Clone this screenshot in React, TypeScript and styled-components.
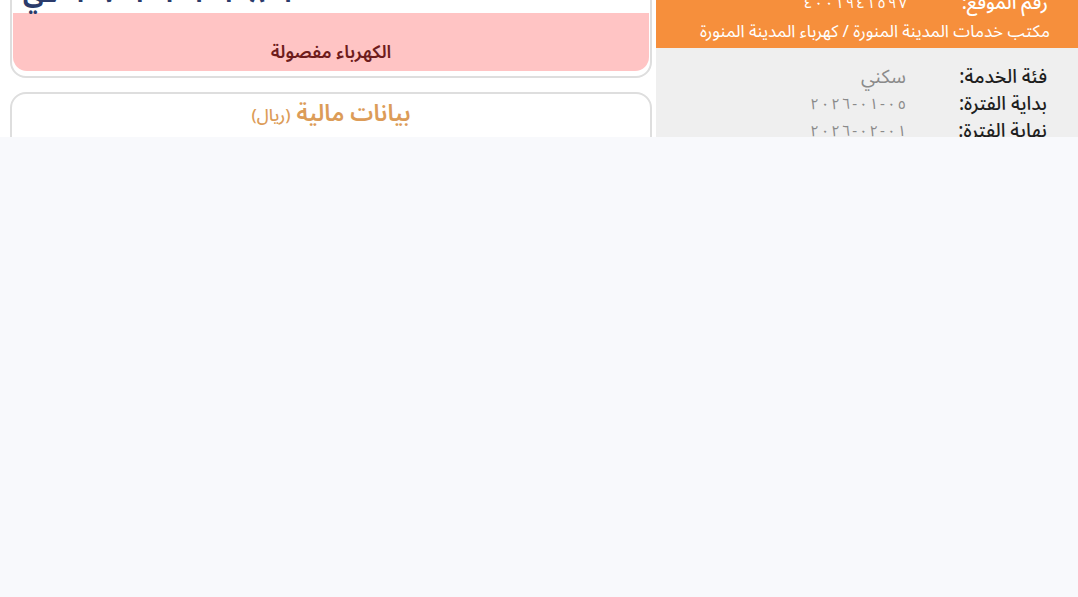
import React from 'react';
import styled, { createGlobalStyle } from 'styled-components';

const GlobalStyle = createGlobalStyle`
  html, body {
    margin: 0;
    padding: 0;
    background: #f8f9fc;
    font-family: "Noto Sans Arabic", "DejaVu Sans", "Noto Sans", sans-serif;
  }
`;

const arabic = `"Noto Sans Arabic", "DejaVu Sans", "Noto Sans", sans-serif`;

// letter-spacing is ignored for Arabic script, so spread the digits with thin spaces
const spread = (s: string) => s.split('').join('\u2009');

const Strip = styled.div`
  height: 137px;
  overflow: hidden;
  background: #ffffff;
`;

// the screenshot is a page scrolled down a little, so the content starts above the fold
const Scroller = styled.div`
  margin-top: -37px;
  display: grid;
  grid-template-columns: 642px 1fr;
  column-gap: 4px;
  padding-left: 10px;
`;

const LeftColumn = styled.div`
  display: flex;
  flex-direction: column;
  gap: 14px;
`;

const Card = styled.div`
  background: #ffffff;
  border: 2px solid #dedede;
  border-radius: 16px;
  padding: 0 1px 5px;
  overflow: hidden;
`;

const NumberRow = styled.div`
  height: 42px;
  display: flex;
  align-items: flex-end;
  padding: 0 10px 6px;
  direction: ltr;
`;

const BigNumber = styled.span`
  font-family: ${arabic};
  font-size: 26px;
  font-weight: 700;
  color: #2b3b6b;
  line-height: 1;
  word-spacing: 8px;
  unicode-bidi: bidi-override;
`;

const Banner = styled.div`
  height: 58px;
  background: #ffc4c4;
  border-radius: 0 0 14px 14px;
  display: flex;
  align-items: flex-end;
  justify-content: center;
  padding-bottom: 7px;
  box-sizing: border-box;
`;

const BannerText = styled.span`
  font-family: ${arabic};
  font-size: 18px;
  line-height: 24px;
  font-weight: 600;
  color: #6e1c1c;
  direction: rtl;
`;

const FinanceCard = styled(Card)`
  height: 200px;
  padding: 4px 0 0;
`;

const FinanceTitle = styled.h2`
  margin: 0;
  text-align: center;
  direction: rtl;
  font-family: ${arabic};
  font-size: 23px;
  font-weight: 600;
  color: #dc9c58;
  line-height: 32px;
`;

const Small = styled.span`
  font-size: 17px;
  font-weight: 500;
`;

const RightColumn = styled.div`
  display: flex;
  flex-direction: column;
  direction: rtl;
  background: #efefef;
  min-height: 260px;
`;

const OrangeHeader = styled.div`
  background: #f68f3c;
  padding: 26px 30px 1px 12px;
  color: #ffffff;
`;

const InfoRow = styled.div<{ $line?: number }>`
  display: grid;
  grid-template-columns: 141px 1fr;
  line-height: ${(p) => p.$line ?? 27}px;
  font-family: ${arabic};
  font-size: 19px;
  text-align: right;
`;

const Label = styled.span<{ $light?: boolean }>`
  color: ${(p) => (p.$light ? '#ffffff' : '#1f1f1f')};
  font-weight: 500;
  white-space: nowrap;
`;

const Value = styled.span<{ $light?: boolean; $ltr?: boolean }>`
  color: ${(p) => (p.$light ? '#ffffff' : '#8a8a8a')};
  font-size: ${(p) => (p.$ltr ? 15 : 19)}px;
  direction: ${(p) => (p.$ltr ? 'ltr' : 'rtl')};
  unicode-bidi: ${(p) => (p.$ltr ? 'bidi-override' : 'normal')};
  text-align: right;
  white-space: nowrap;
`;

const Office = styled.div`
  font-family: ${arabic};
  font-size: 17px;
  line-height: 30px;
  color: #ffffff;
  text-align: right;
  white-space: nowrap;
  margin-right: -2px;
`;

const Details = styled.div`
  padding: 16px 31px 0 20px;
`;

const rows = [
  { label: 'فئة الخدمة:', value: 'سكني', ltr: false },
  { label: 'بداية الفترة:', value: '٢٠٢٦-٠١-٠٥', ltr: true },
  { label: 'نهاية الفترة:', value: '٢٠٢٦-٠٢-٠١', ltr: true },
];

export default function App() {
  return (
    <>
      <GlobalStyle />
      <Strip>
        <Scroller>
          <LeftColumn>
            <Card>
              <NumberRow>
                <BigNumber>يـ ١ ٧ ١ ١ ١ ١ ٨ ١</BigNumber>
              </NumberRow>
              <Banner>
                <BannerText>الكهرباء مفصولة</BannerText>
              </Banner>
            </Card>
            <FinanceCard>
              <FinanceTitle>
                بيانات مالية <Small>(ريال)</Small>
              </FinanceTitle>
            </FinanceCard>
          </LeftColumn>
          <RightColumn>
            <OrangeHeader>
              <InfoRow $line={28}>
                <Label $light>رقم الموقع:</Label>
                <Value $light $ltr>
                  {spread('٤٠٠١٩٤١٥٩٧')}
                </Value>
              </InfoRow>
              <Office>مكتب خدمات المدينة المنورة / كهرباء المدينة المنورة</Office>
            </OrangeHeader>
            <Details>
              {rows.map((r) => (
                <InfoRow key={r.label}>
                  <Label>{r.label}</Label>
                  <Value $ltr={r.ltr}>{r.ltr ? spread(r.value) : r.value}</Value>
                </InfoRow>
              ))}
            </Details>
          </RightColumn>
        </Scroller>
      </Strip>
    </>
  );
}
